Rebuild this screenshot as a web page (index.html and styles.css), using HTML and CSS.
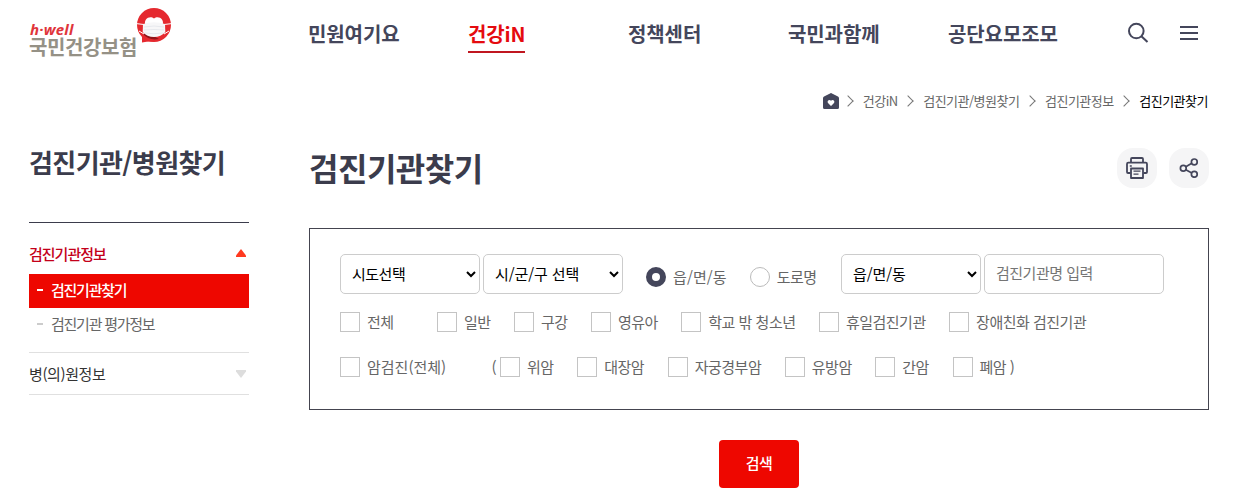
FILE: index.html
```html
<!DOCTYPE html>
<html lang="ko">
<head>
  <meta charset="UTF-8">
  <meta name="viewport" content="width=device-width, initial-scale=1.0">
  <title>검진기관찾기 | 국민건강보험</title>
  <link rel="stylesheet" href="styles.css">
</head>
<body>
  <header class="header">
    <a href="#" class="logo">
      <span class="logo-text">
        <em>h·well</em>
        <strong>국민건강보험</strong>
      </span>
      <svg class="logo-mark" width="36" height="36" viewBox="0 0 36 36">
        <circle cx="18" cy="17" r="17" fill="#e5292f"/>
        <path d="M6 26 L6 34.5 Q12 33 18 33.5 Z" fill="#e5292f"/>
        <path d="M7 26 Q13 33 23 31 L12 25 Z" fill="#8f1418"/>
        <path d="M9.5 17 C7 11 14 7 18 10.5 C22 7 29 11 26.5 17 Z" fill="#fff"/>
        <path d="M1 15.7 L7 16.4 M35 15.7 L29 16.4 M3 23 L8 26 M33 23 L28 26" stroke="#fff" stroke-width="1"/>
        <path d="M7 16 Q18 12.5 29 16 L29.3 24 Q25 29 18 29 Q11 29 6.7 24 Z" fill="#f7f7f8"/>
        <path d="M8 19 Q18 17 28 19 M8 22 Q18 21 28 22 M9 25 Q18 26.5 27 25" fill="none" stroke="#dfe3e8" stroke-width="0.7"/>
      </svg>
    </a>
    <nav class="gnb">
      <a href="#">민원여기요</a>
      <a href="#" class="on">건강iN</a>
      <a href="#">정책센터</a>
      <a href="#">국민과함께</a>
      <a href="#">공단요모조모</a>
    </nav>
    <div class="util">
      <button type="button" aria-label="검색">
        <svg width="22" height="22" viewBox="0 0 22 22" fill="none" stroke="#44465b" stroke-width="2">
          <circle cx="9.3" cy="9" r="7.3"/>
          <path d="M14.4 14.2 L20.5 20"/>
        </svg>
      </button>
      <button type="button" aria-label="전체메뉴">
        <svg width="18" height="14" viewBox="0 0 18 14" fill="#44465b">
          <rect width="18" height="2"/>
          <rect y="6" width="18" height="2"/>
          <rect y="12" width="18" height="2"/>
        </svg>
      </button>
    </div>
  </header>

  <div class="breadcrumb">
    <a href="#" class="home" aria-label="홈">
      <svg width="16" height="16" viewBox="0 0 16 16">
        <path d="M8 0 L15 3.6 Q16 4.1 16 5.2 V14.5 Q16 16 14.5 16 H1.5 Q0 16 0 14.5 V5.2 Q0 4.1 1 3.6 Z" fill="#44465b"/>
        <path d="M8 13 L5 10 C3.6 8.2 6.2 5.7 8 7.7 C9.8 5.7 12.4 8.2 11 10 Z" fill="#fff"/>
      </svg>
    </a>
    <a href="#">건강iN</a>
    <a href="#">검진기관/병원찾기</a>
    <a href="#">검진기관정보</a>
    <a href="#" class="current">검진기관찾기</a>
  </div>

  <div class="container">
    <aside class="lnb">
      <h2>검진기관/병원찾기</h2>
      <ul class="menu">
        <li class="open">
          <a href="#" class="menu-title">검진기관정보
            <svg width="10" height="8" viewBox="0 0 10 8"><path d="M5 0 L10 6.5 V8 H0 V6.5 Z" fill="#ff3a20"/></svg>
          </a>
          <ul class="submenu">
            <li class="on"><a href="#">검진기관찾기</a></li>
            <li><a href="#">검진기관 평가정보</a></li>
          </ul>
        </li>
        <li>
          <a href="#" class="menu-title hospital">병(의)원정보
            <svg width="10" height="8" viewBox="0 0 10 8"><path d="M0 0 H10 V1.5 L5 8 L0 1.5 Z" fill="#ddd"/></svg>
          </a>
        </li>
      </ul>
    </aside>

    <main class="content">
      <div class="title-row">
        <h1>검진기관찾기</h1>
        <div class="tools">
          <button type="button" aria-label="인쇄">
            <svg width="22" height="22" viewBox="0 0 22 22" fill="none" stroke="#44465b" stroke-width="1.8" stroke-linejoin="round">
              <path d="M5 5.5 V2 Q5 1 6 1 H16 Q17 1 17 2 V5.5"/>
              <path d="M4.5 16 H2 Q1 16 1 15 V7 Q1 5.7 2.3 5.7 H19.7 Q21 5.7 21 7 V15 Q21 16 20 16 H17.5"/>
              <path d="M5 11.5 H17 V21 H5 Z"/>
              <path d="M3.8 9 H5.8 M7.5 14.2 H14.5 M7.5 17.2 H12.5" stroke-width="1.3"/>
            </svg>
          </button>
          <button type="button" aria-label="공유">
            <svg width="20" height="20" viewBox="0 0 20 20" fill="none" stroke="#44465b" stroke-width="1.7">
              <circle cx="4.3" cy="10.2" r="2.9"/>
              <circle cx="15.3" cy="3.9" r="2.9"/>
              <circle cx="15.3" cy="16.3" r="2.9"/>
              <path d="M6.8 8.7 L12.8 5.3 M6.8 11.7 L12.8 14.9"/>
            </svg>
          </button>
        </div>
      </div>

      <form class="search-form">
        <div class="search-box">
          <div class="row fields">
            <select class="sido"><option>시도선택</option></select>
            <select class="sigungu"><option>시/군/구 선택</option></select>
            <div class="radios">
              <label class="jibun"><input type="radio" name="addr" checked>읍/면/동</label>
              <label><input type="radio" name="addr">도로명</label>
            </div>
            <select class="dong"><option>읍/면/동</option></select>
            <input type="text" class="keyword" placeholder="검진기관명 입력">
          </div>
          <div class="row checks">
            <label class="all"><input type="checkbox">전체</label>
            <label><input type="checkbox">일반</label>
            <label><input type="checkbox">구강</label>
            <label><input type="checkbox">영유아</label>
            <label><input type="checkbox">학교 밖 청소년</label>
            <label><input type="checkbox">휴일검진기관</label>
            <label><input type="checkbox">장애친화 검진기관</label>
          </div>
          <div class="row checks cancer">
            <label class="all"><input type="checkbox">암검진(전체)</label>
            <span class="paren">(</span>
            <label><input type="checkbox">위암</label>
            <label><input type="checkbox">대장암</label>
            <label><input type="checkbox">자궁경부암</label>
            <label><input type="checkbox">유방암</label>
            <label><input type="checkbox">간암</label>
            <label><input type="checkbox">폐암 )</label>
          </div>
        </div>
        <button type="button" class="btn-search">검색</button>
      </form>
    </main>
  </div>
</body>
</html>
```
FILE: styles.css
```css
* {
  box-sizing: border-box;
}
body {
  margin: 0;
  padding: 0 25px 0 29px;
  height: 504px;
  overflow: hidden;
  background: #fff;
  color: #333;
  font-family: "Noto Sans CJK KR", sans-serif;
  font-size: 15px;
  letter-spacing: -0.5px;
}
a {
  color: inherit;
  text-decoration: none;
}
ul {
  list-style: none;
  margin: 0;
  padding: 0;
}
h1, h2 {
  margin: 0;
  color: #3b3c4c;
  font-weight: 700;
}
button {
  border: 0;
  padding: 0;
  background: none;
  font-family: inherit;
  cursor: pointer;
}
svg {
  display: block;
}

/* header */
.header {
  display: flex;
  height: 68px;
}
.logo {
  display: flex;
  width: 279px;
  padding-top: 8px;
}
.logo-text {
  display: flex;
  flex-direction: column;
  width: 107px;
  padding-top: 14px;
  white-space: nowrap;
}
.logo-text em {
  padding-left: 1px;
  color: #e0353a;
  font: italic 700 15px/15px "Open Sans", sans-serif;
  letter-spacing: 0.2px;
}
.logo-text strong {
  color: #959186;
  font-size: 20px;
  font-weight: 700;
  line-height: 20px;
  letter-spacing: -0.4px;
}
.gnb {
  display: flex;
  width: 800px;
  padding-top: 16px;
}
.gnb a {
  width: 160px;
  height: 37px;
  color: #44465b;
  font-size: 20px;
  font-weight: 700;
  line-height: 36px;
  letter-spacing: -0.1px;
  white-space: nowrap;
}
.gnb .on {
  width: 57px;
  margin-right: 103px;
  border-bottom: 2px solid #c01720;
  color: #e50b0f;
}
.util {
  display: flex;
  align-items: flex-start;
  gap: 31px;
  padding: 22px 0 0 19px;
}
.util button + button {
  padding-top: 4px;
}

/* breadcrumb */
.breadcrumb {
  display: flex;
  justify-content: flex-end;
  align-items: center;
  height: 64px;
  padding: 1px 1px 0 0;
  color: #666;
  font-size: 13px;
}
.breadcrumb a {
  display: flex;
  align-items: center;
  padding-bottom: 1px;
}
.breadcrumb .home {
  margin-right: -2px;
  padding-bottom: 0;
}
.breadcrumb a + a::before {
  content: "";
  width: 7px;
  height: 7px;
  margin: 1px 11px 0 6.5px;
  border: solid #777;
  border-width: 1px 1px 0 0;
  transform: rotate(45deg);
}
.breadcrumb .current {
  color: #000;
}

/* left menu */
.container {
  display: flex;
  gap: 60px;
}
.lnb {
  width: 220px;
}
.lnb h2 {
  height: 91px;
  padding-top: 10px;
  border-bottom: 1px solid #3b3c4c;
  margin-bottom: 11px;
  font-size: 26px;
  line-height: 40px;
  letter-spacing: -0.6px;
  white-space: nowrap;
}
.menu {
  letter-spacing: -1px;
}
.menu > li {
  border-bottom: 1px solid #e0e0e0;
}
.menu-title {
  display: flex;
  justify-content: space-between;
  align-items: center;
  height: 41px;
  padding-right: 3px;
}
.hospital {
  letter-spacing: -0.4px;
}
.open .menu-title {
  height: 40px;
  padding-bottom: 2px;
  color: #c4001a;
  font-weight: 500;
}
.submenu {
  padding-bottom: 10px;
  color: #666;
  letter-spacing: -1.25px;
}
.submenu a {
  display: flex;
  align-items: center;
  height: 34px;
  padding: 0 0 3px 8px;
}
.submenu a::before {
  content: "";
  width: 6px;
  height: 2px;
  margin: 1px 8px 0 0;
  background: #ccc;
}
.submenu .on {
  background: #ee0700;
  color: #fff;
  font-weight: 500;
}
.submenu .on a::before {
  background: #fff;
}

/* content */
.content {
  width: 900px;
}
.title-row {
  display: flex;
  justify-content: space-between;
  height: 96px;
  padding-top: 16px;
}
.title-row h1 {
  font-size: 32px;
  line-height: 39px;
  letter-spacing: -0.5px;
}
.tools {
  display: flex;
  gap: 12px;
}
.tools button {
  display: flex;
  justify-content: center;
  align-items: center;
  width: 40px;
  height: 40px;
  border-radius: 16px;
  background: #f5f5f6;
}
.search-box {
  height: 182px;
  padding: 25px 30px 0;
  border: 1px solid #44444f;
  color: #666;
}
.row {
  display: flex;
  align-items: center;
}
.row label {
  display: flex;
  align-items: center;
  gap: 7px;
  white-space: nowrap;
}
.fields {
  height: 40px;
}
select, .keyword {
  height: 40px;
  margin: 0;
  border: 1px solid #ccc;
  border-radius: 5px;
  background: #fff;
  color: #000;
  font-family: inherit;
  font-size: 15px;
  letter-spacing: -0.5px;
}
select {
  width: 140px;
  padding: 0 0 2px 7px;
}
.sido {
  margin-right: 3px;
}
.sigungu, .dong {
  letter-spacing: -0.1px;
}
.dong {
  margin-right: 3px;
}
.keyword {
  width: 180px;
  padding: 0 11px 3px;
}
.keyword::placeholder {
  color: #757575;
}
.radios {
  display: flex;
  width: 218px;
  gap: 23px;
  padding: 4px 0 0 23px;
}
.radios .jibun {
  letter-spacing: 0.1px;
}
.radios input {
  appearance: none;
  width: 20px;
  height: 20px;
  margin: 2px 0 0;
  border: 1px solid #bbb;
  border-radius: 50%;
}
.radios input:checked {
  border: 6px solid #44465b;
}
.checks {
  gap: 23.4px;
  height: 20px;
  margin-top: 17px;
}
.checks input {
  appearance: none;
  width: 20px;
  height: 20px;
  margin: 2px 0 0;
  border: 1px solid #c4c4c4;
}
.checks .all {
  width: 73.6px;
}
.cancer {
  gap: 23.6px;
  margin-top: 25px;
}
.cancer .all {
  width: 127.8px;
  letter-spacing: 0;
}
.cancer .paren {
  width: 8.6px;
  margin-right: -23.6px;
}
.btn-search {
  display: block;
  width: 80px;
  height: 48px;
  margin: 30px auto 0;
  padding-bottom: 3px;
  border-radius: 4px;
  background: #ee0700;
  color: #fff;
  font-size: 15px;
  font-weight: 500;
  letter-spacing: -0.5px;
}
```
